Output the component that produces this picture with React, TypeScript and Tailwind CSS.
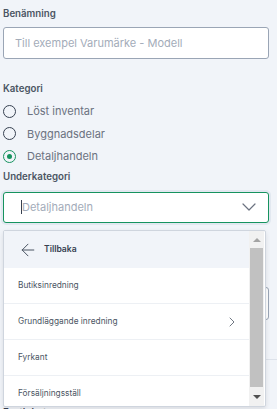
import { ArrowLeft, ChevronDown, ChevronRight } from "lucide-react";

const kategorier = ["Löst inventar", "Byggnadsdelar", "Detaljhandeln"];
const items = [
  { name: "Butiksinredning", sub: false },
  { name: "Grundläggande inredning", sub: true },
  { name: "Fyrkant", sub: false },
  { name: "Försäljningsställ", sub: false },
  { name: "Hyllsystem", sub: false },
];

function Radio({ label, checked }: { label: string; checked?: boolean }) {
  return (
    <label className="flex items-center h-[22.5px]">
      <span
        className={`w-[13px] h-[13px] rounded-full border-[1.6px] flex items-center justify-center ${
          checked ? "border-[#16935f]" : "border-[#374151]"
        }`}
      >
        {checked && <span className="w-[5px] h-[5px] rounded-full bg-[#16935f]" />}
      </span>
      <span className="ml-[11px] text-[11px] text-[#6b7280]">{label}</span>
    </label>
  );
}

export default function App() {
  return (
    <div
      className="w-[277px] h-[409px] overflow-hidden bg-[#f1f4f9] pl-[3px] pt-[7px]"
      style={{ fontFamily: "Inter, 'Noto Sans', sans-serif" }}
    >
      <div className="text-[9.7px] font-semibold text-[#4b5563] leading-[14px]">Benämning</div>
      <div className="mt-[6px] w-[266px] h-[32px] rounded-[3px] border border-[#9aa5b5] bg-white flex items-center px-[11px]">
        <span className="text-[11px] text-[#a3acb9]">Till exempel Varumärke - Modell</span>
      </div>

      <div className="mt-[23px] text-[9.7px] font-semibold text-[#4b5563] leading-[14px]">Kategori</div>
      <div className="mt-[4px] flex flex-col">
        {kategorier.map((k, i) => (
          <Radio key={k} label={k} checked={i === 2} />
        ))}
      </div>

      <div className="mt-[2px] text-[9.7px] font-semibold text-[#4b5563] leading-[14px]">Underkategori</div>
      <div className="relative">
        <div className="mt-[8px] w-[266px] h-[31.5px] rounded-[3px] border-[1.5px] border-[#16935f] bg-white flex items-center pl-[17px] pr-[7px] shadow-[0_0_0_2px_#e2e8f0]">
          <span className="w-px h-[14px] bg-[#374151]" />
          <span className="flex-1 text-[11px] text-[#a3acb9]">Detaljhandeln</span>
          <ChevronDown className="w-[24px] h-[24px] text-[#6b7280]" strokeWidth={1.2} />
        </div>

        {/* fields behind the open menu */}
        <div className="mt-[39px] text-[9.7px] font-semibold text-[#4b5563] leading-[14px]">Beskrivning</div>
        <div className="mt-[11px] w-[266px] h-[33px] rounded-[3px] border border-[#9aa5b5] bg-white" />
        <div className="mt-[39px] w-[274px] h-px bg-[#dde2ea]" />
        <div className="mt-[46px] text-[9.7px] font-semibold text-[#374151] leading-[14px]">Fastighet</div>

        <div className="absolute left-0 top-[38.5px] w-[263px] h-[177px] bg-white border border-[#cfd5de] rounded-[2px] shadow-[0_2px_5px_rgba(0,0,0,0.10)] flex overflow-hidden">
          <div className="flex-1 flex flex-col">
            <div className="h-[37px] shrink-0 bg-[#f1f4f9] flex items-center pl-[14px] gap-[6px]">
              <ArrowLeft className="w-[20px] h-[20px] text-[#4b5563]" strokeWidth={1.2} />
              <span className="text-[8.6px] font-semibold text-[#374151]">Tillbaka</span>
            </div>
            {items.map((it) => (
              <div
                key={it.name}
                className="h-[36px] shrink-0 flex items-center pl-[14px] pr-[9px] border-b border-[#edf0f4]"
              >
                <span className="flex-1 text-[8.3px] text-[#4b5563]">{it.name}</span>
                {it.sub && <ChevronRight className="w-[16px] h-[16px] text-[#4b5563]" strokeWidth={1.2} />}
              </div>
            ))}
          </div>
          <div className="w-[15px] mr-[1px] bg-[#f1f1f1] flex flex-col">
            <div className="h-[17px] flex items-center justify-center">
              <span className="w-0 h-0 border-x-[4px] border-x-transparent border-b-[4px] border-b-[#a3a3a3]" />
            </div>
            <div className="flex-1 mx-[1px] bg-[#c1c1c1]" />
            <div className="h-[19px] flex items-center justify-center">
              <span className="w-0 h-0 border-x-[4px] border-x-transparent border-t-[4px] border-t-[#505050]" />
            </div>
          </div>
        </div>
      </div>
    </div>
  );
}
